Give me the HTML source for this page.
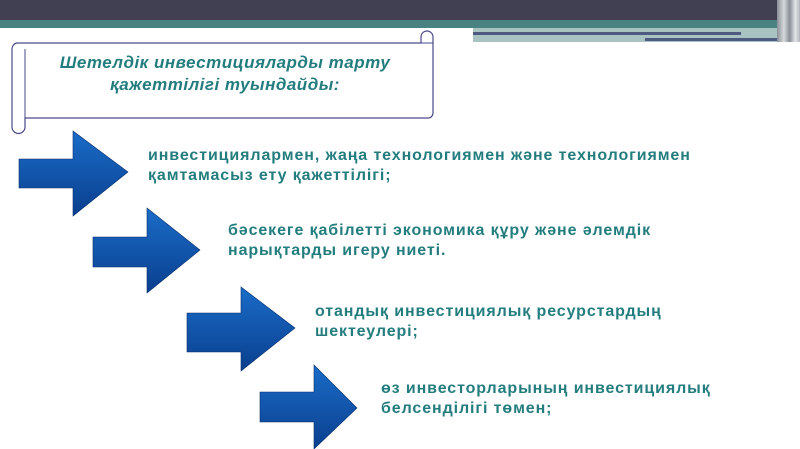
<!DOCTYPE html>
<html><head><meta charset="utf-8"><style>
body{margin:0;width:800px;height:449px;overflow:hidden;background:#fff;position:relative;font-family:"Liberation Sans",sans-serif}
.t{position:absolute;color:#237d7e;font-weight:bold;font-size:16px;line-height:20px;letter-spacing:0.9px;white-space:nowrap}
</style></head><body>
<div style="position:absolute;left:0;top:0;width:800px;height:20px;background:#404052"></div>
<div style="position:absolute;left:0;top:20px;width:800px;height:8px;background:#4a8282"></div>
<div style="position:absolute;left:473px;top:28px;width:327px;height:14px;background:#a9c3c3"></div>
<div style="position:absolute;left:473px;top:32px;width:268px;height:3px;background:#4e5a80"></div>
<div style="position:absolute;left:645px;top:38px;width:140px;height:3px;background:#4e5a80"></div>
<div style="position:absolute;left:777px;top:0;width:23px;height:42px;background:linear-gradient(90deg,#8a8f98,#d6d9dc 30%,#8a8f98 55%,#e4e6e8 80%,#b0b4b8)"></div>
<svg width="800" height="449" style="position:absolute;left:0;top:0">
<defs><linearGradient id="g" x1="0" y1="0" x2="0" y2="1"><stop offset="0" stop-color="#1a6cc8"/><stop offset="1" stop-color="#0a3f8e"/></linearGradient></defs>
<path d="M17 43 H421 V37 a6 6 0 0 1 12 0 V113 a5 5 0 0 1 -5 5 H25 V127 a6 6 0 0 1 -13 0 V49 a6 6 0 0 1 5 -6 Z" fill="#fff" stroke="#4a4a8a" stroke-width="1.2"/>
<path d="M25 49 V118 M421 43 H433" fill="none" stroke="#4a4a8a" stroke-width="1"/>
<g fill="url(#g)" stroke="#0a2f6e" stroke-width="0.6">
<path d="M19 159 H73 V131 L128 172 L73 216 V188 H19 Z"/>
<path d="M93 237 H147 V208 L200 250 L147 293 V267 H93 Z"/>
<path d="M187 313 H241 V287 L295 328 L241 371 V352 H187 Z"/>
<path d="M260 392 H314 V365 L357 408 L314 449 V422 H260 Z"/>
</g>
</svg>
<div style="position:absolute;left:25px;top:52px;width:400px;text-align:center;color:#237d7e;font-weight:bold;font-style:italic;font-size:17px;line-height:22px;letter-spacing:0.5px">Шетелдік инвестицияларды тарту<br>қажеттілігі туындайды:</div>
<div class="t" style="left:148px;top:146px">инвестициялармен, жаңа технологиямен және технологиямен<br>қамтамасыз ету қажеттілігі;</div>
<div class="t" style="left:228px;top:221px">бәсекеге қабілетті экономика құру және әлемдік<br>нарықтарды игеру ниеті.</div>
<div class="t" style="left:315px;top:302px">отандық инвестициялық ресурстардың<br>шектеулері;</div>
<div class="t" style="left:381px;top:379px">өз инвесторларының инвестициялық<br>белсенділігі төмен;</div>
</body></html>
